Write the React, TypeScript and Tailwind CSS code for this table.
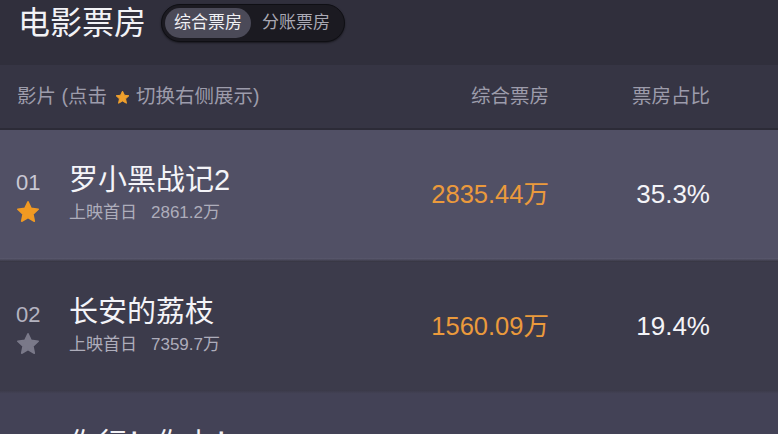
import React from "react";

const FONT = '"Liberation Sans", "Noto Sans CJK SC", sans-serif';

function Star({ size, color }: { size: number; color: string }) {
  return (
    <svg width={size} height={size} viewBox="0 0 24 24">
      <path
        d="M12 1.8l3.1 6.6 7.1.8-5.3 4.9 1.4 7.1L12 17.6l-6.3 3.6 1.4-7.1L1.8 9.2l7.1-.8z"
        fill={color}
        stroke={color}
        strokeWidth="1.6"
        strokeLinejoin="round"
      />
    </svg>
  );
}

type Row = {
  rank: string;
  title: string;
  first: string;
  total: string;
  pct: string;
  active: boolean;
  bg: string;
};

const rows: Row[] = [
  { rank: "01", title: "罗小黑战记2", first: "2861.2万", total: "2835.44万", pct: "35.3%", active: true, bg: "bg-[#515065]" },
  { rank: "02", title: "长安的荔枝", first: "7359.7万", total: "1560.09万", pct: "19.4%", active: false, bg: "bg-[#3c3b4b]" },
  { rank: "03", title: "你行！你上！", first: "1006.3万", total: "980.12万", pct: "12.2%", active: false, bg: "bg-[#434256]" },
];

export default function App() {
  return (
    <div className="w-[778px] h-[434px] overflow-hidden bg-[#302f3c]" style={{ fontFamily: FONT }}>
      {/* Header */}
      <div className="h-[65px] flex items-start pt-[4px] pl-[18px] bg-[#302f3c]">
        <div className="text-[32px] leading-[38px] text-[#f2f2f6]">电影票房</div>
        <div className="ml-[15px] h-[38px] flex items-center rounded-full bg-[#1b1a21] border border-[#0f0f14] p-[3px] shadow-[0_1px_2px_rgba(0,0,0,0.5)]">
          <div className="h-[30px] px-[9px] flex items-center rounded-full bg-[#4b4a58] text-[17px] text-[#f0f0f4]">综合票房</div>
          <div className="h-[30px] px-[11px] flex items-center text-[17px] text-[#a9a8b3]">分账票房</div>
        </div>
      </div>
      {/* Column header */}
      <div className="h-[63px] flex items-center bg-[#363544] text-[19.5px] text-[#9d9cab]">
        <div className="flex-1 pl-[17px] flex items-center">
          <span>影片 (点击</span>
          <span className="ml-[8px] mr-[6px] mt-[2px]">
            <Star size={15} color="#f0a02c" />
          </span>
          <span>切换右侧展示)</span>
        </div>
        <div className="w-[180px] text-right">综合票房</div>
        <div className="w-[161px] text-right pr-[68px] box-content">票房占比</div>
      </div>
      <div className="h-[2px] bg-[#2c2b37]" />
      {rows.map((r, i) => (
        <div key={i}>
          <div className={`h-[128px] flex items-center ${r.bg}`}>
            <div className="flex-1 flex items-center pl-[16px]">
              <div className="w-[53px] flex flex-col items-start mt-[4px]">
                <div className={`text-[22px] leading-[28px] ${r.active ? "text-[#c9c8d4]" : "text-[#b4b3c0]"}`}>{r.rank}</div>
                <div className="mt-[3px]">
                  <Star size={24} color={r.active ? "#f19a22" : "#7a7989"} />
                </div>
              </div>
              <div className="flex flex-col">
                <div className="text-[29px] leading-[36px] text-[#f4f4f8]">{r.title}</div>
                <div className="text-[17px] leading-[26px] mt-[2px] text-[#aeadbb]">
                  上映首日<span className="ml-[14px]">{r.first}</span>
                </div>
              </div>
            </div>
            <div className="w-[180px] text-right text-[25.5px] text-[#eb9a3c]">{r.total}</div>
            <div className="w-[161px] pr-[68px] box-content text-right text-[26px] text-[#f4f4f8]">{r.pct}</div>
          </div>
          <div className={`h-[4px] ${r.active ? "bg-[linear-gradient(#5b5a70,#34333f)]" : "bg-[linear-gradient(#3a3948,#444357)]"}`} />
        </div>
      ))}
    </div>
  );
}
